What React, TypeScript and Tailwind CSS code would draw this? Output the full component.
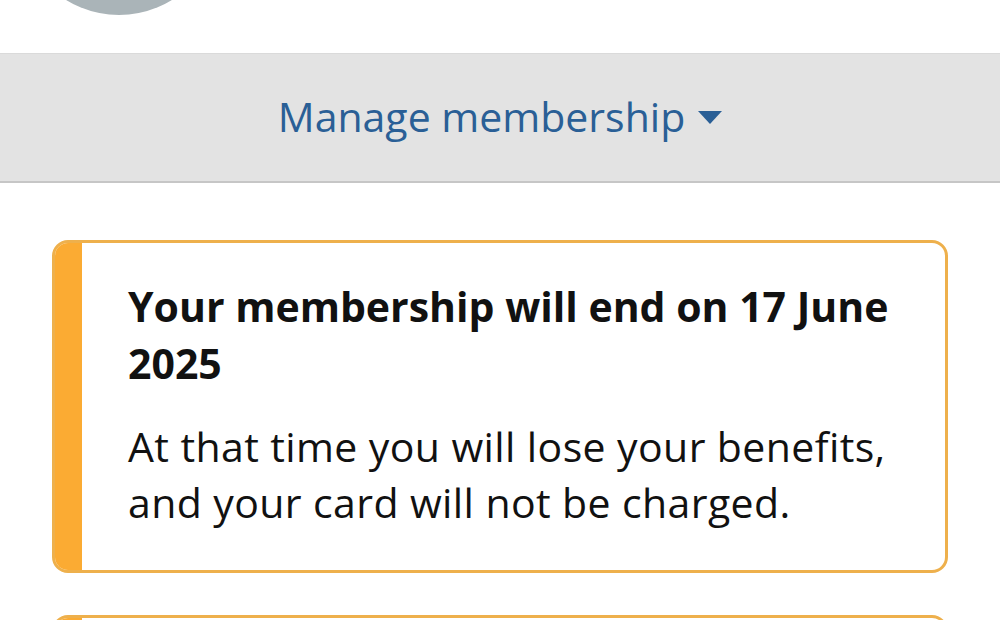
import React from "react";

export default function App() {
  return (
    <div
      className="w-[1000px] h-[620px] overflow-hidden bg-white relative"
      style={{ fontFamily: '"Open Sans", "Noto Sans", sans-serif' }}
    >
      <div className="h-[53px] relative">
        <div className="absolute left-[18px] top-[-187px] w-[202px] h-[202px] rounded-full bg-[#aab4b8]" />
      </div>
      <div className="h-[130px] bg-[#e3e3e3] border-t border-t-[#dadada] border-b-2 border-b-[#c6c6c6] flex items-center justify-center">
        <div className="flex items-center gap-[13px] text-[#2a5f96] text-[41px] leading-none pb-[2px]">
          <span>Manage membership</span>
          <svg width="24" height="14" viewBox="0 0 24 14" className="mt-[2px]">
            <path d="M0 0 H24 L12 13 Z" fill="#2a5f96" />
          </svg>
        </div>
      </div>
      <div className="px-[52px] pt-[57px] flex flex-col gap-[42px]">
        <div className="flex rounded-[16px] border-[3px] border-[#eeb04c] overflow-hidden">
          <div className="w-[27px] bg-[#fbab33] shrink-0" />
          <div className="pl-[46px] pr-[30px] pt-[35px] pb-[40px] text-[#111111]">
            <div className="text-[41px] font-bold leading-[57px]">
              Your membership will end on 17 June 2025
            </div>
            <div className="mt-[26px] text-[41px] leading-[56px] tracking-[0.4px]">
              At that time you will lose your benefits, and your card will not be charged.
            </div>
          </div>
        </div>
        <div className="flex rounded-[16px] border-[3px] border-[#eeb04c] overflow-hidden h-[200px]">
          <div className="w-[27px] bg-[#fbab33] shrink-0" />
          <div className="flex-1" />
        </div>
      </div>
    </div>
  );
}
